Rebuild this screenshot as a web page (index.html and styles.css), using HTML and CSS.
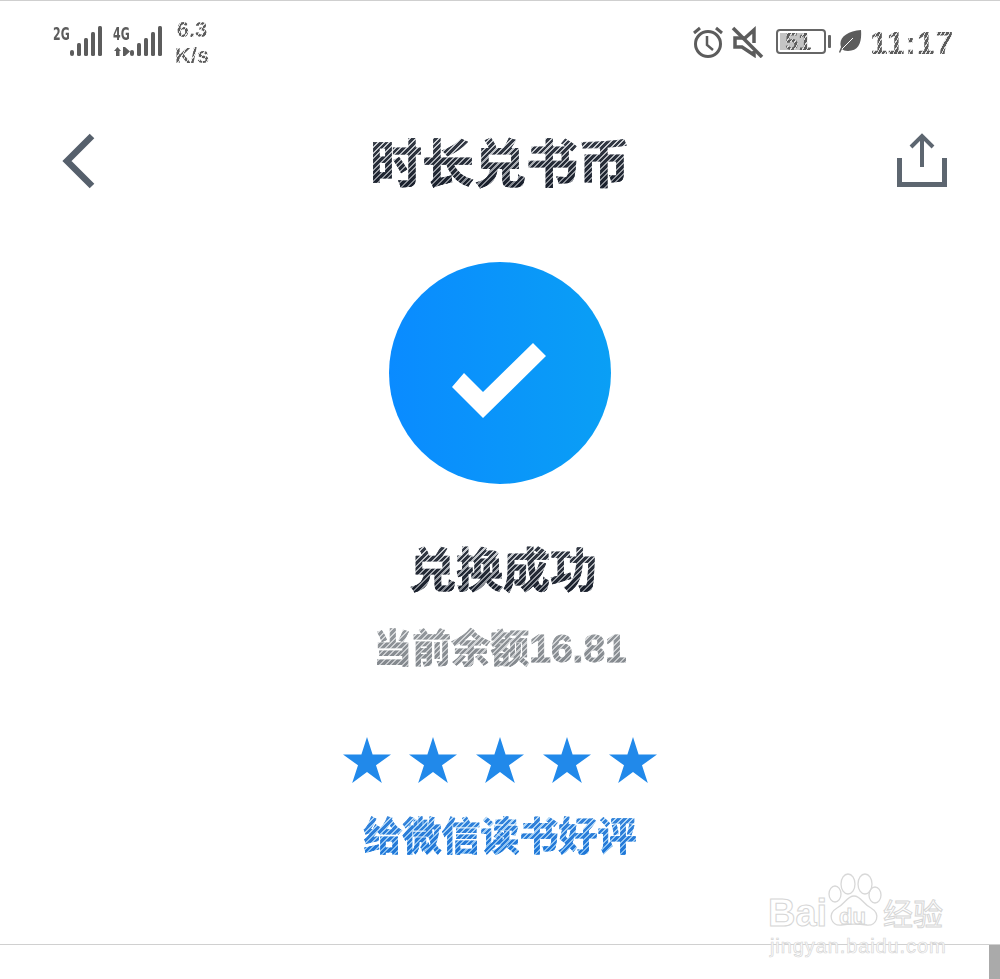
FILE: index.html
```html
<!DOCTYPE html>
<html lang="zh-CN">
<head>
  <meta charset="UTF-8">
  <title>时长兑书币</title>
  <link rel="stylesheet" href="styles.css">
</head>
<body>
  <div class="page">
    <header class="status-bar">
      <div class="status-left">
        <div class="signal">
          <span class="net-label">2G</span>
          <svg class="bars" width="32" height="30" viewBox="0 0 32 30">
            <rect x="0" y="24" width="4" height="6" rx="2"/>
            <rect x="7" y="17" width="4" height="13" rx="1.5"/>
            <rect x="14" y="12" width="4" height="18" rx="1.5"/>
            <rect x="21" y="6" width="4" height="24" rx="1.5"/>
            <rect x="28" y="0" width="4" height="30" rx="1.5"/>
          </svg>
        </div>
        <div class="signal">
          <div class="net-stack">
            <span class="net-label">4G</span>
            <svg width="17" height="9" viewBox="0 0 17 9">
              <path d="M4.5 0 L8 4 H6.5 V9 H3 V4 H1 Z M10 0 H12 L17 4.5 L12 9 H10 Z"/>
            </svg>
          </div>
          <svg class="bars" width="32" height="30" viewBox="0 0 32 30">
            <rect x="0" y="24" width="4" height="6" rx="2"/>
            <rect x="7" y="17" width="4" height="13" rx="1.5"/>
            <rect x="14" y="12" width="4" height="18" rx="1.5"/>
            <rect x="21" y="6" width="4" height="24" rx="1.5"/>
            <rect x="28" y="0" width="4" height="30" rx="1.5"/>
          </svg>
        </div>
        <div class="speed hatch-gray">6.3<br>K/s</div>
      </div>
      <div class="status-right">
        <svg class="alarm" width="32" height="32" viewBox="0 0 32 32" fill="none" stroke="#5c5c5c" stroke-width="3">
          <circle cx="16" cy="18" r="12.5"/>
          <path d="M15 10 V19 L21 24" stroke-width="2.5"/>
          <path d="M2 7 L8 2 M30 7 L24 2" stroke-width="3"/>
        </svg>
        <svg class="mute" width="33" height="32" viewBox="0 0 33 32" fill="none" stroke="#5c5c5c" stroke-width="3.5">
          <path d="M2 2 L31 31"/>
          <path d="M23 17 V4 L14 12 H4 V21 H11 L23 29 V25"/>
        </svg>
        <div class="battery">
          <div class="battery-body">
            <div class="battery-level"></div>
            <span class="battery-num hatch-gray">51</span>
          </div>
          <div class="battery-nub"></div>
        </div>
        <svg class="leaf" width="23" height="23" viewBox="0 0 23 23">
          <path d="M22 0 C23 12 20 21 9 21 C6 21 4 20 3 19 L1 23 L0 22 L2 17 C-1 8 8 1 22 0 Z" fill="#5c5c5c"/>
          <path d="M3 19 L14 8" stroke="#fff" stroke-width="1" fill="none"/>
        </svg>
        <span class="clock hatch-gray">11:17</span>
      </div>
    </header>

    <nav class="nav-bar">
      <svg width="36" height="60" viewBox="0 0 36 60" fill="none" stroke="#56606c" stroke-width="6.5">
        <path d="M32 5 L7 30 L32 55"/>
      </svg>
      <h1 class="nav-title hatch-dark">时长兑书币</h1>
      <svg width="50" height="58" viewBox="0 0 50 58" fill="none" stroke="#5d6670" stroke-width="4">
        <path d="M2.5 26 V52.5 H47.5 V26" stroke-width="5"/>
        <path d="M25 35 V5"/>
        <path d="M14 15 L25 4 L36 15"/>
      </svg>
    </nav>

    <main class="result">
      <div class="result-circle">
        <svg width="222" height="222" viewBox="0 0 222 222">
          <path d="M63 125 L75 111 L94 130 L144 81 L157 94 L94 156 Z" fill="#fff"/>
        </svg>
      </div>
      <h2 class="result-title hatch-dark">兑换成功</h2>
      <p class="result-balance hatch-light">当前余额16.81</p>
      <div class="stars">
        <svg width="48" height="46" viewBox="0 0 48 46"><path d="M24 0 L29.6 17.5 H48 L33 28.3 L38.8 46 L24 35 L9.2 46 L15 28.3 L0 17.5 H18.4 Z"/></svg>
        <svg width="48" height="46" viewBox="0 0 48 46"><path d="M24 0 L29.6 17.5 H48 L33 28.3 L38.8 46 L24 35 L9.2 46 L15 28.3 L0 17.5 H18.4 Z"/></svg>
        <svg width="48" height="46" viewBox="0 0 48 46"><path d="M24 0 L29.6 17.5 H48 L33 28.3 L38.8 46 L24 35 L9.2 46 L15 28.3 L0 17.5 H18.4 Z"/></svg>
        <svg width="48" height="46" viewBox="0 0 48 46"><path d="M24 0 L29.6 17.5 H48 L33 28.3 L38.8 46 L24 35 L9.2 46 L15 28.3 L0 17.5 H18.4 Z"/></svg>
        <svg width="48" height="46" viewBox="0 0 48 46"><path d="M24 0 L29.6 17.5 H48 L33 28.3 L38.8 46 L24 35 L9.2 46 L15 28.3 L0 17.5 H18.4 Z"/></svg>
      </div>
      <a class="result-review hatch-blue">给微信读书好评</a>
    </main>

    <footer class="bottom-bar">
      <div class="scroll-thumb"></div>
    </footer>

    <!-- watermark sits on top of the page -->
    <div class="watermark">
      <svg class="paw" width="58" height="56" viewBox="0 0 58 56" fill="none" stroke="#d8d8d8" stroke-width="1.3">
        <ellipse cx="10" cy="22" rx="6" ry="8"/>
        <ellipse cx="23" cy="12" rx="7" ry="10"/>
        <ellipse cx="40" cy="12" rx="7" ry="10"/>
        <ellipse cx="50" cy="23" rx="6" ry="8"/>
        <path d="M29 24 C36 24 38 32 46 36 C56 42 52 54 42 53 C34 52 24 52 16 53 C6 54 2 42 12 36 C20 32 22 24 29 24 Z"/>
      </svg>
      <span class="wm-bai">Bai</span>
      <span class="wm-du">du</span>
      <span class="wm-cn">经验</span>
      <span class="wm-url">jingyan.baidu.com</span>
    </div>
  </div>
</body>
</html>
```

FILE: styles.css
```css
* {
  box-sizing: border-box;
}
html, body {
  margin: 0;
  padding: 0;
  background: #fff;
}
body {
  font-family: "Liberation Sans", "Noto Sans CJK SC", sans-serif;
  overflow: hidden;
}
.page {
  position: relative;
  width: 1000px;
  height: 979px;
  display: flex;
  flex-direction: column;
  border-top: 1px solid #cfcfcf;
  overflow: hidden;
}

/* striped text, the reference is a badly resampled photo of the screen */
.hatch-dark,
.hatch-light,
.hatch-gray,
.hatch-blue {
  color: transparent;
  -webkit-background-clip: text;
  background-clip: text;
}
.hatch-dark,
.hatch-light,
.hatch-blue {
  -webkit-text-stroke: .8px transparent;
}
.hatch-dark {
  background-image:
    repeating-linear-gradient(-45deg, rgba(20, 26, 38, .8) 0 2.5px, rgba(255, 255, 255, .4) 2.5px 4px),
    linear-gradient(to bottom, #a9aeb4 15%, #2c3340 85%);
}
.hatch-light {
  background-image:
    repeating-linear-gradient(-45deg, rgba(120, 125, 130, .6) 0 2.5px, rgba(255, 255, 255, .45) 2.5px 4px),
    linear-gradient(to bottom, #c0c3c6, #8d9298);
}
.hatch-gray {
  background-image: repeating-linear-gradient(-60deg, #5c5c5c 0 2.5px, #ddd 2.5px 3.5px);
}
.hatch-blue {
  background-image:
    repeating-linear-gradient(-45deg, rgba(25, 110, 210, .75) 0 2.5px, rgba(255, 255, 255, .4) 2.5px 4px),
    linear-gradient(to bottom, #8cc4f2, #1f86e4);
}

/* status bar */
.status-bar {
  height: 69px;
  display: flex;
  justify-content: space-between;
  padding: 19px 46px 0 53px;
}
.status-left {
  display: flex;
  gap: 11px;
  height: 44px;
}
.status-left .signal {
  display: flex;
  align-items: flex-end;
  height: 36px;
}
.status-left svg {
  fill: #5c5c5c;
  flex: none;
}
.net-label {
  display: block;
  width: 17px;
  font-family: "DejaVu Sans Condensed", "DejaVu Sans", sans-serif;
  font-weight: bold;
  font-size: 18px;
  line-height: 18px;
  color: #5c5c5c;
  white-space: nowrap;
  align-self: flex-start;
  margin-top: 5px;
  transform: scaleX(.68);
  transform-origin: left center;
}
.net-stack {
  display: flex;
  flex-direction: column;
  width: 17px;
  height: 36px;
  justify-content: space-between;
}
.speed {
  font-size: 22px;
  line-height: 26px;
  font-weight: bold;
  text-align: center;
  width: 36px;
  margin: -3px 0 0 1px;
  height: 52px;
}
.status-right {
  display: flex;
  align-items: flex-start;
  height: 40px;
  padding-top: 6px;
}
.status-right .alarm {
  margin-right: -3px;
}
.status-right .mute {
  margin-left: 10px;
}
.battery {
  display: flex;
  align-items: center;
  margin: 3px 0 0 12px;
  gap: 2px;
}
.battery-body {
  position: relative;
  width: 50px;
  height: 25px;
  border: 2px solid #666;
  border-radius: 4px;
  padding: 2px;
}
.battery-level {
  width: 25px;
  height: 100%;
  background: #c4c4c4;
}
.battery-num {
  position: absolute;
  left: 7px;
  top: -1px;
  font-size: 24px;
  line-height: 23px;
  font-weight: bold;
}
.battery-nub {
  width: 3px;
  height: 13px;
  background: #666;
  border-radius: 1px;
}
.leaf {
  margin: 4px 0 0 8px;
}
.clock {
  margin: 1px 0 0 8px;
  font-size: 32px;
  line-height: 32px;
  letter-spacing: .8px;
  font-weight: bold;
}

/* nav */
.nav-bar {
  height: 182px;
  display: flex;
  align-items: center;
  justify-content: space-between;
  padding: 0 53px 0 60px;
}
.nav-title {
  margin: 8px 0 0 7px;
  font-size: 52px;
  line-height: 60px;
  font-weight: bold;
}

/* result */
.result {
  display: flex;
  flex-direction: column;
  align-items: center;
  padding-top: 10px;
}
.result-circle {
  width: 222px;
  height: 222px;
  border-radius: 50%;
  background: linear-gradient(to right, #0a8bff, #0a9ff5);
}
.result-circle svg {
  display: block;
}
.result-title {
  margin: 59px 0 0 6px;
  font-size: 47px;
  line-height: 56px;
  font-weight: bold;
}
.result-balance {
  margin: 28px 0 0;
  font-size: 39px;
  line-height: 44px;
  font-weight: bold;
}
.stars {
  display: flex;
  gap: 18.7px;
  margin-top: 66px;
  height: 48px;
}
.stars svg {
  fill: #2189ea;
}
.result-review {
  margin-top: 30px;
  font-size: 39px;
  line-height: 44px;
  font-weight: bold;
}

/* bottom */
.bottom-bar {
  margin-top: auto;
  height: 35px;
  border-top: 1px solid #d0d0d0;
  display: flex;
  justify-content: flex-end;
}
.scroll-thumb {
  width: 11px;
  height: 100%;
  background: #aaa;
}

/* watermark */
.watermark {
  position: absolute;
  left: 766px;
  top: 871px;
  width: 190px;
  height: 90px;
}
.paw {
  position: absolute;
  left: 59px;
  top: 0;
}
.wm-bai,
.wm-du,
.wm-cn,
.wm-url {
  position: absolute;
  white-space: nowrap;
  color: #fff;
  -webkit-text-stroke: 1px #d6d6d6;
}
.wm-bai {
  left: 2px;
  top: 21px;
  font-size: 38px;
  line-height: 40px;
  font-weight: bold;
}
.wm-du {
  left: 73px;
  top: 33px;
  font-size: 22px;
  line-height: 24px;
  font-weight: bold;
}
.wm-cn {
  left: 117px;
  top: 28px;
  font-size: 30px;
  line-height: 30px;
}
.wm-url {
  left: 4px;
  top: 62px;
  font-size: 20px;
  line-height: 24px;
  letter-spacing: .9px;
  -webkit-text-stroke: .7px #d6d6d6;
}
```
